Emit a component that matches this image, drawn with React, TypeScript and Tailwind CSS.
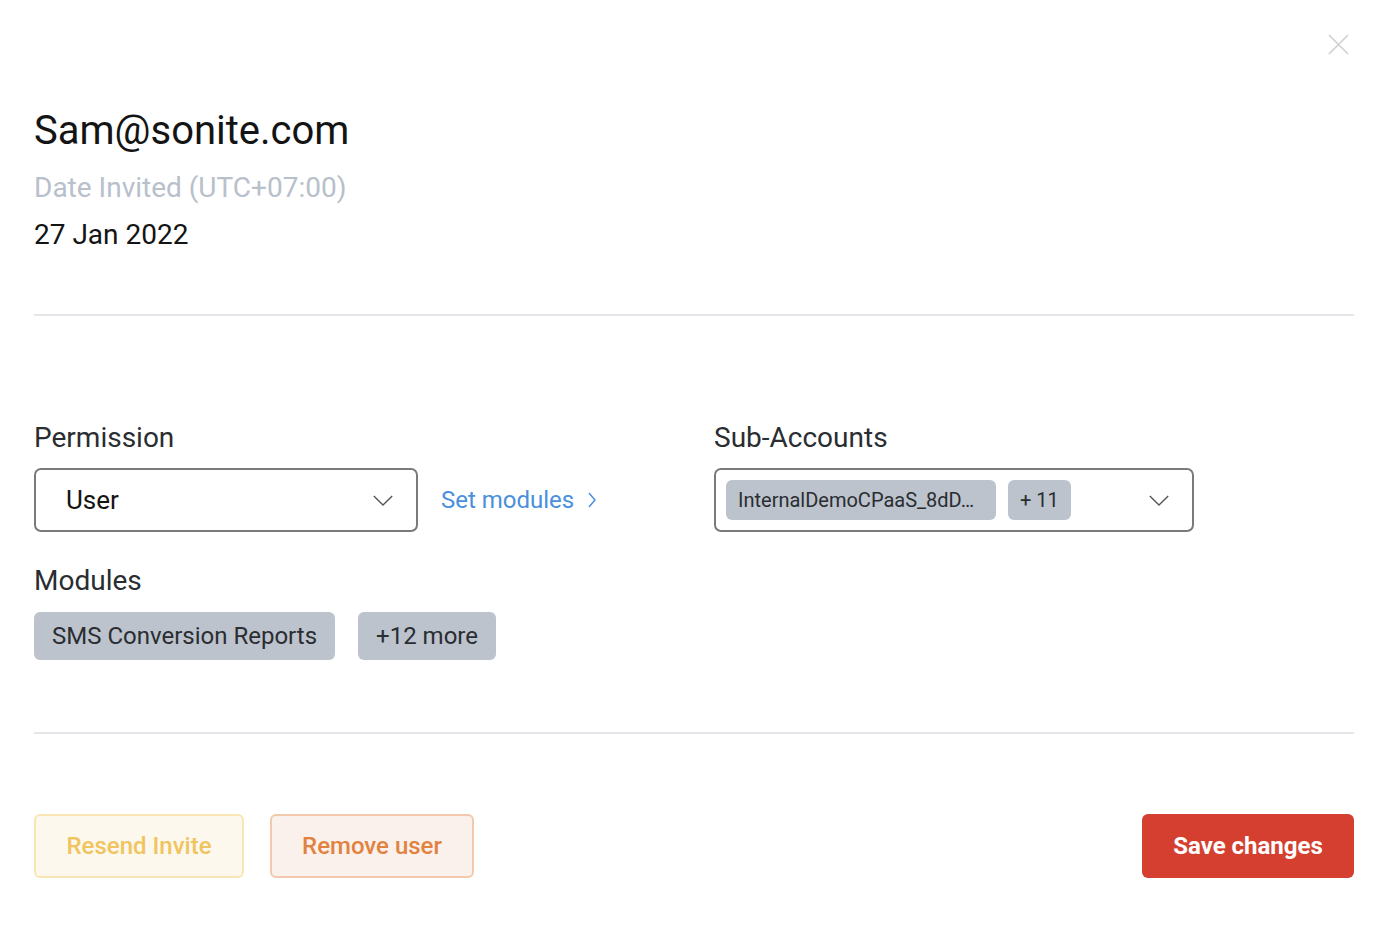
import React from 'react';

const ChevronDown: React.FC<{ className?: string }> = ({ className }) => (
  <svg className={className} viewBox="0 0 24 14" fill="none" stroke="currentColor" strokeWidth={1.5}>
    <path d="M2 2l10 10L22 2" />
  </svg>
);

const ChevronRight: React.FC<{ className?: string }> = ({ className }) => (
  <svg className={className} viewBox="0 0 10 18" fill="none" stroke="currentColor" strokeWidth={1.5}>
    <path d="M2 2l6 7-6 7" />
  </svg>
);

const CloseIcon: React.FC<{ className?: string }> = ({ className }) => (
  <svg className={className} viewBox="0 0 22 22" fill="none" stroke="currentColor" strokeWidth={1.6}>
    <path d="M1 1l20 20M21 1L1 21" />
  </svg>
);

export default function App() {
  return (
    <div className="min-h-screen bg-white text-[#1a1a1a]" style={{ fontFamily: 'Roboto, "Liberation Sans", sans-serif' }}>
      <div className="relative pl-[34px] pr-[28px]">
        <button className="absolute right-[33px] top-[34px] text-[#cfcfcf]" aria-label="Close">
          <CloseIcon className="w-[21px] h-[21px]" />
        </button>

        <div className="pt-[105px] pb-[59px]">
          <h1 className="text-[40px] leading-[52px] text-[#141414]">Sam@sonite.com</h1>
          <div className="mt-[9px] text-[28px] leading-[44px] text-[#b8c0cb]">Date Invited (UTC+07:00)</div>
          <div className="mt-[5px] text-[28px] leading-[40px] text-[#141414]">27 Jan 2022</div>
        </div>

        <div className="h-[2px] bg-[#e4e6e9]" />

        <div className="pt-[102px] pb-[72px] flex">
          <div className="w-[680px]">
            <div className="text-[28px] leading-[40px] text-[#2a2d31]">Permission</div>
            <div className="mt-[10px] flex items-center">
              <div className="w-[384px] h-[64px] border-2 border-[#7a7a7a] rounded-[7px] flex items-center justify-between pl-[30px] pr-[22px]">
                <span className="text-[26px] text-[#141414]">User</span>
                <ChevronDown className="w-[22px] h-[13px] text-[#555]" />
              </div>
              <a className="ml-[23px] flex items-center gap-[13px] text-[24px] text-[#4a90dc]">
                Set modules
                <ChevronRight className="w-[10px] h-[18px]" />
              </a>
            </div>
            <div className="mt-[29px] text-[28px] leading-[40px] text-[#2a2d31]">Modules</div>
            <div className="mt-[11px] flex gap-[23px]">
              <span className="h-[48px] px-[18px] rounded-[6px] bg-[#bcc3cd] text-[24px] text-[#2a2d31] flex items-center">SMS Conversion Reports</span>
              <span className="h-[48px] px-[18px] rounded-[6px] bg-[#bcc3cd] text-[24px] text-[#2a2d31] flex items-center">+12 more</span>
            </div>
          </div>
          <div>
            <div className="text-[28px] leading-[40px] text-[#2a2d31]">Sub-Accounts</div>
            <div className="mt-[10px] w-[480px] h-[64px] border-2 border-[#7a7a7a] rounded-[7px] flex items-center pl-[10px] pr-[22px]">
              <span className="h-[40px] w-[270px] px-[12px] rounded-[6px] bg-[#bcc3cd] text-[20px] text-[#2a2d31] flex items-center">InternalDemoCPaaS_8dD…</span>
              <span className="ml-[12px] h-[40px] px-[12px] rounded-[6px] bg-[#bcc3cd] text-[20px] text-[#2a2d31] flex items-center">+ 11</span>
              <ChevronDown className="ml-auto w-[22px] h-[13px] text-[#555]" />
            </div>
          </div>
        </div>

        <div className="h-[2px] bg-[#e4e6e9]" />

        <div className="pt-[80px] flex items-center">
          <button className="w-[210px] h-[64px] rounded-[6px] border-2 border-[#fae6b5] bg-[#fdf8ed] text-[24px] font-medium text-[#f0c45e]">Resend Invite</button>
          <button className="ml-[26px] w-[204px] h-[64px] rounded-[6px] border-2 border-[#f2c9ad] bg-[#fbf1ec] text-[24px] font-medium text-[#e2823f]">Remove user</button>
          <button className="ml-auto w-[212px] h-[64px] rounded-[6px] bg-[#d43f30] text-[24px] font-bold text-white">Save changes</button>
        </div>
      </div>
    </div>
  );
}
